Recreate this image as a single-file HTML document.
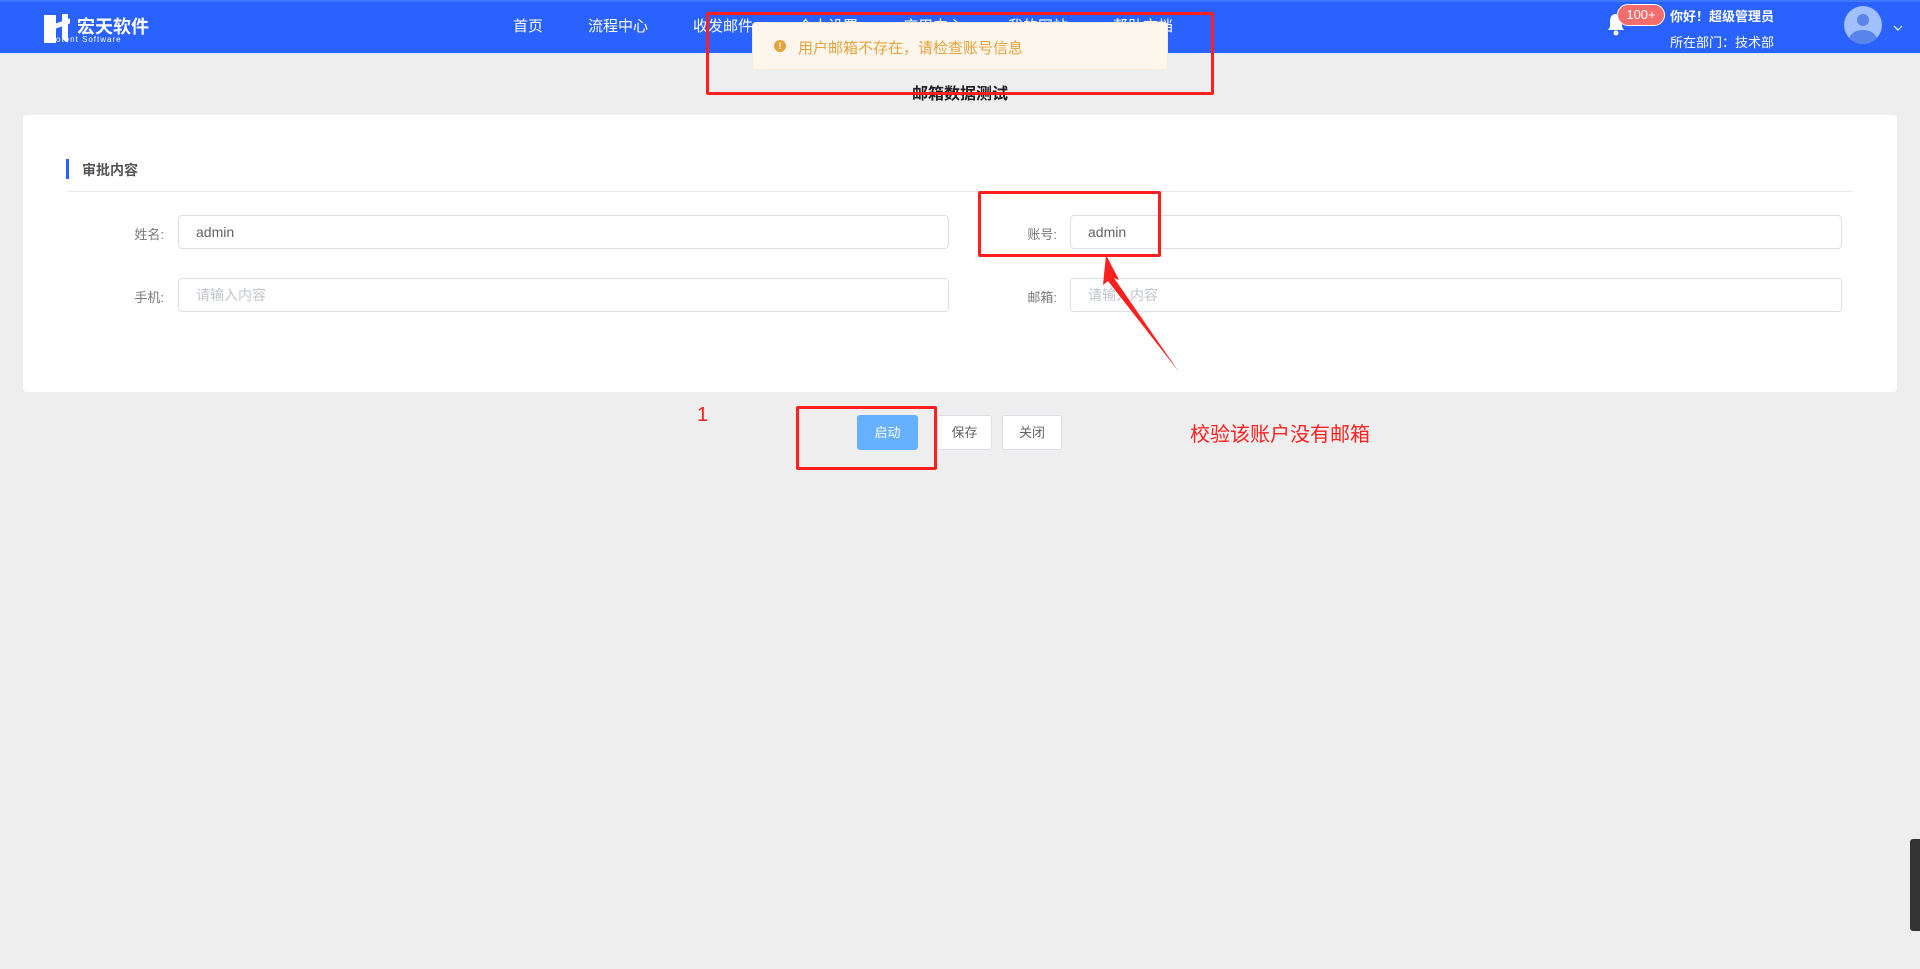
<!DOCTYPE html>
<html><head><meta charset="utf-8"><style>
*{margin:0;padding:0;box-sizing:border-box}
body{width:1920px;height:969px;background:#eeeeee;font-family:"Liberation Sans","Noto Sans CJK SC",sans-serif;position:relative;overflow:hidden}
.abs{position:absolute}
.hdr{left:0;top:0;width:1920px;height:53px;background:#2962ff;border-top:2px solid #3b78ff}
.nav{color:#fff;font-size:15px;top:15px}
.inp{position:absolute;height:34px;border:1px solid #dcdfe6;border-radius:4px;background:#fff;font-size:14px;color:#606266;padding-left:17px;line-height:32px}
.ph{color:#c0c4cc}
.lbl{position:absolute;font-size:13px;color:#777;text-align:right;width:60px}
.btn{position:absolute;height:35px;border:1px solid #dcdfe6;border-radius:3px;background:#fff;font-size:13px;color:#606266;text-align:center;line-height:33px}
.red{position:absolute;border:3px solid #ff1f1f;border-radius:2px}
</style></head><body>
<div class="abs hdr"></div>
<!-- logo -->
<div class="abs" style="left:44px;top:15px;width:12px;height:28px;background:#fff"></div>
<div class="abs" style="left:50px;top:22px;width:20px;height:5px;background:#fff;transform:skewY(-20deg)"></div>
<div class="abs" style="left:62px;top:14px;width:6px;height:28px;background:#fff;border-radius:0 0 0 6px"></div>
<div class="abs" style="left:77px;top:13px;color:#fff;font-weight:bold;font-size:18px">宏天软件</div>
<div class="abs" style="left:56px;top:35px;color:#fff;font-size:8px;letter-spacing:1px">otent Software</div>
<div class="abs nav" style="left:513px">首页</div>
<div class="abs nav" style="left:588px">流程中心</div>
<div class="abs nav" style="left:693px">收发邮件</div>
<div class="abs nav" style="left:798px">个人设置</div>
<div class="abs nav" style="left:903px">应用中心</div>
<div class="abs nav" style="left:1008px">我的网站</div>
<div class="abs nav" style="left:1113px">帮助文档</div>
<svg class="abs" style="left:1606px;top:12px" width="20" height="24" viewBox="0 0 20 24"><path d="M10 2c-4 0-6 3-6 7v6l-2 3h16l-2-3V9c0-4-2-7-6-7z" fill="#fff"/><circle cx="10" cy="21" r="2.5" fill="#fff"/></svg>
<div class="abs" style="left:1617px;top:4px;width:48px;height:22px;background:#f56c6c;border:1px solid #fff;border-radius:11px;color:#fff;font-size:13px;text-align:center;line-height:20px">100+</div>
<div class="abs" style="left:1670px;top:6px;color:#fff;font-size:13px;font-weight:bold">你好！超级管理员</div>
<div class="abs" style="left:1670px;top:32px;color:#fff;font-size:13px">所在部门：技术部</div>
<div class="abs" style="left:1844px;top:6px;width:38px;height:38px;border-radius:50%;background:#a0c0ff;overflow:hidden">
<div class="abs" style="left:13px;top:8px;width:12px;height:12px;border-radius:50%;background:#5a85e8"></div>
<div class="abs" style="left:5px;top:24px;width:28px;height:20px;border-radius:50%;background:#5a85e8"></div></div>
<svg class="abs" style="left:1893px;top:25px" width="10" height="7"><path d="M1 1l4 4 4-4" stroke="#fff" fill="none" stroke-width="1.2"/></svg>
<div class="abs" style="left:0;width:1920px;top:80px;text-align:center;font-size:16px;font-weight:bold;color:#222">邮箱数据测试</div>
<div class="abs" style="left:23px;top:115px;width:1874px;height:277px;background:#fff;border-radius:4px"></div>
<div class="abs" style="left:66px;top:159px;width:3px;height:20px;background:#2962ff"></div>
<div class="abs" style="left:82px;top:160px;font-size:14px;font-weight:bold;color:#555">审批内容</div>
<div class="abs" style="left:67px;top:191px;width:1786px;height:1px;background:#eaeaea"></div>
<div class="lbl" style="left:104px;top:224px">姓名:</div>
<div class="inp" style="left:178px;top:215px;width:771px">admin</div>
<div class="lbl" style="left:997px;top:224px">账号:</div>
<div class="inp" style="left:1070px;top:215px;width:772px">admin</div>
<div class="lbl" style="left:104px;top:287px">手机:</div>
<div class="inp ph" style="left:178px;top:278px;width:771px">请输入内容</div>
<div class="lbl" style="left:997px;top:287px">邮箱:</div>
<div class="inp ph" style="left:1070px;top:278px;width:772px">请输入内容</div>
<div class="btn" style="left:857px;top:415px;width:61px;background:#66b1ff;border-color:#66b1ff;color:#fff">启动</div>
<div class="btn" style="left:937px;top:415px;width:55px">保存</div>
<div class="btn" style="left:1002px;top:415px;width:60px">关闭</div>
<div class="abs" style="left:697px;top:404px;color:#ff1f1f;font-size:20px">1</div>
<div class="abs" style="left:1190px;top:418px;color:#ff1f1f;font-size:20px">校验该账户没有邮箱</div>
<div class="abs" style="left:752px;top:22px;width:416px;height:48px;background:#fdf6ec;border:1px solid #faecd8;border-radius:4px"></div>
<div class="abs" style="left:774px;top:40px;width:12px;height:12px;border-radius:50%;background:#e6a23c;color:#fff;font-size:9px;text-align:center;line-height:12px;font-weight:bold">!</div>
<div class="abs" style="left:798px;top:37px;color:#e6a23c;font-size:15px">用户邮箱不存在，请检查账号信息</div>
<div class="red" style="left:706px;top:12px;width:508px;height:83px"></div>
<div class="red" style="left:978px;top:191px;width:183px;height:66px"></div>
<div class="red" style="left:796px;top:406px;width:141px;height:64px"></div>
<svg class="abs" style="left:0;top:0" width="1920" height="969"><path d="M1106 255 L1119 280 L1114 278 L1179 372 L1108 281 L1103 285 Z" fill="#ff1f1f"/></svg>
<div class="abs" style="left:1910px;top:839px;width:10px;height:92px;background:#333;border-radius:3px 0 0 3px"></div>
</body></html>
